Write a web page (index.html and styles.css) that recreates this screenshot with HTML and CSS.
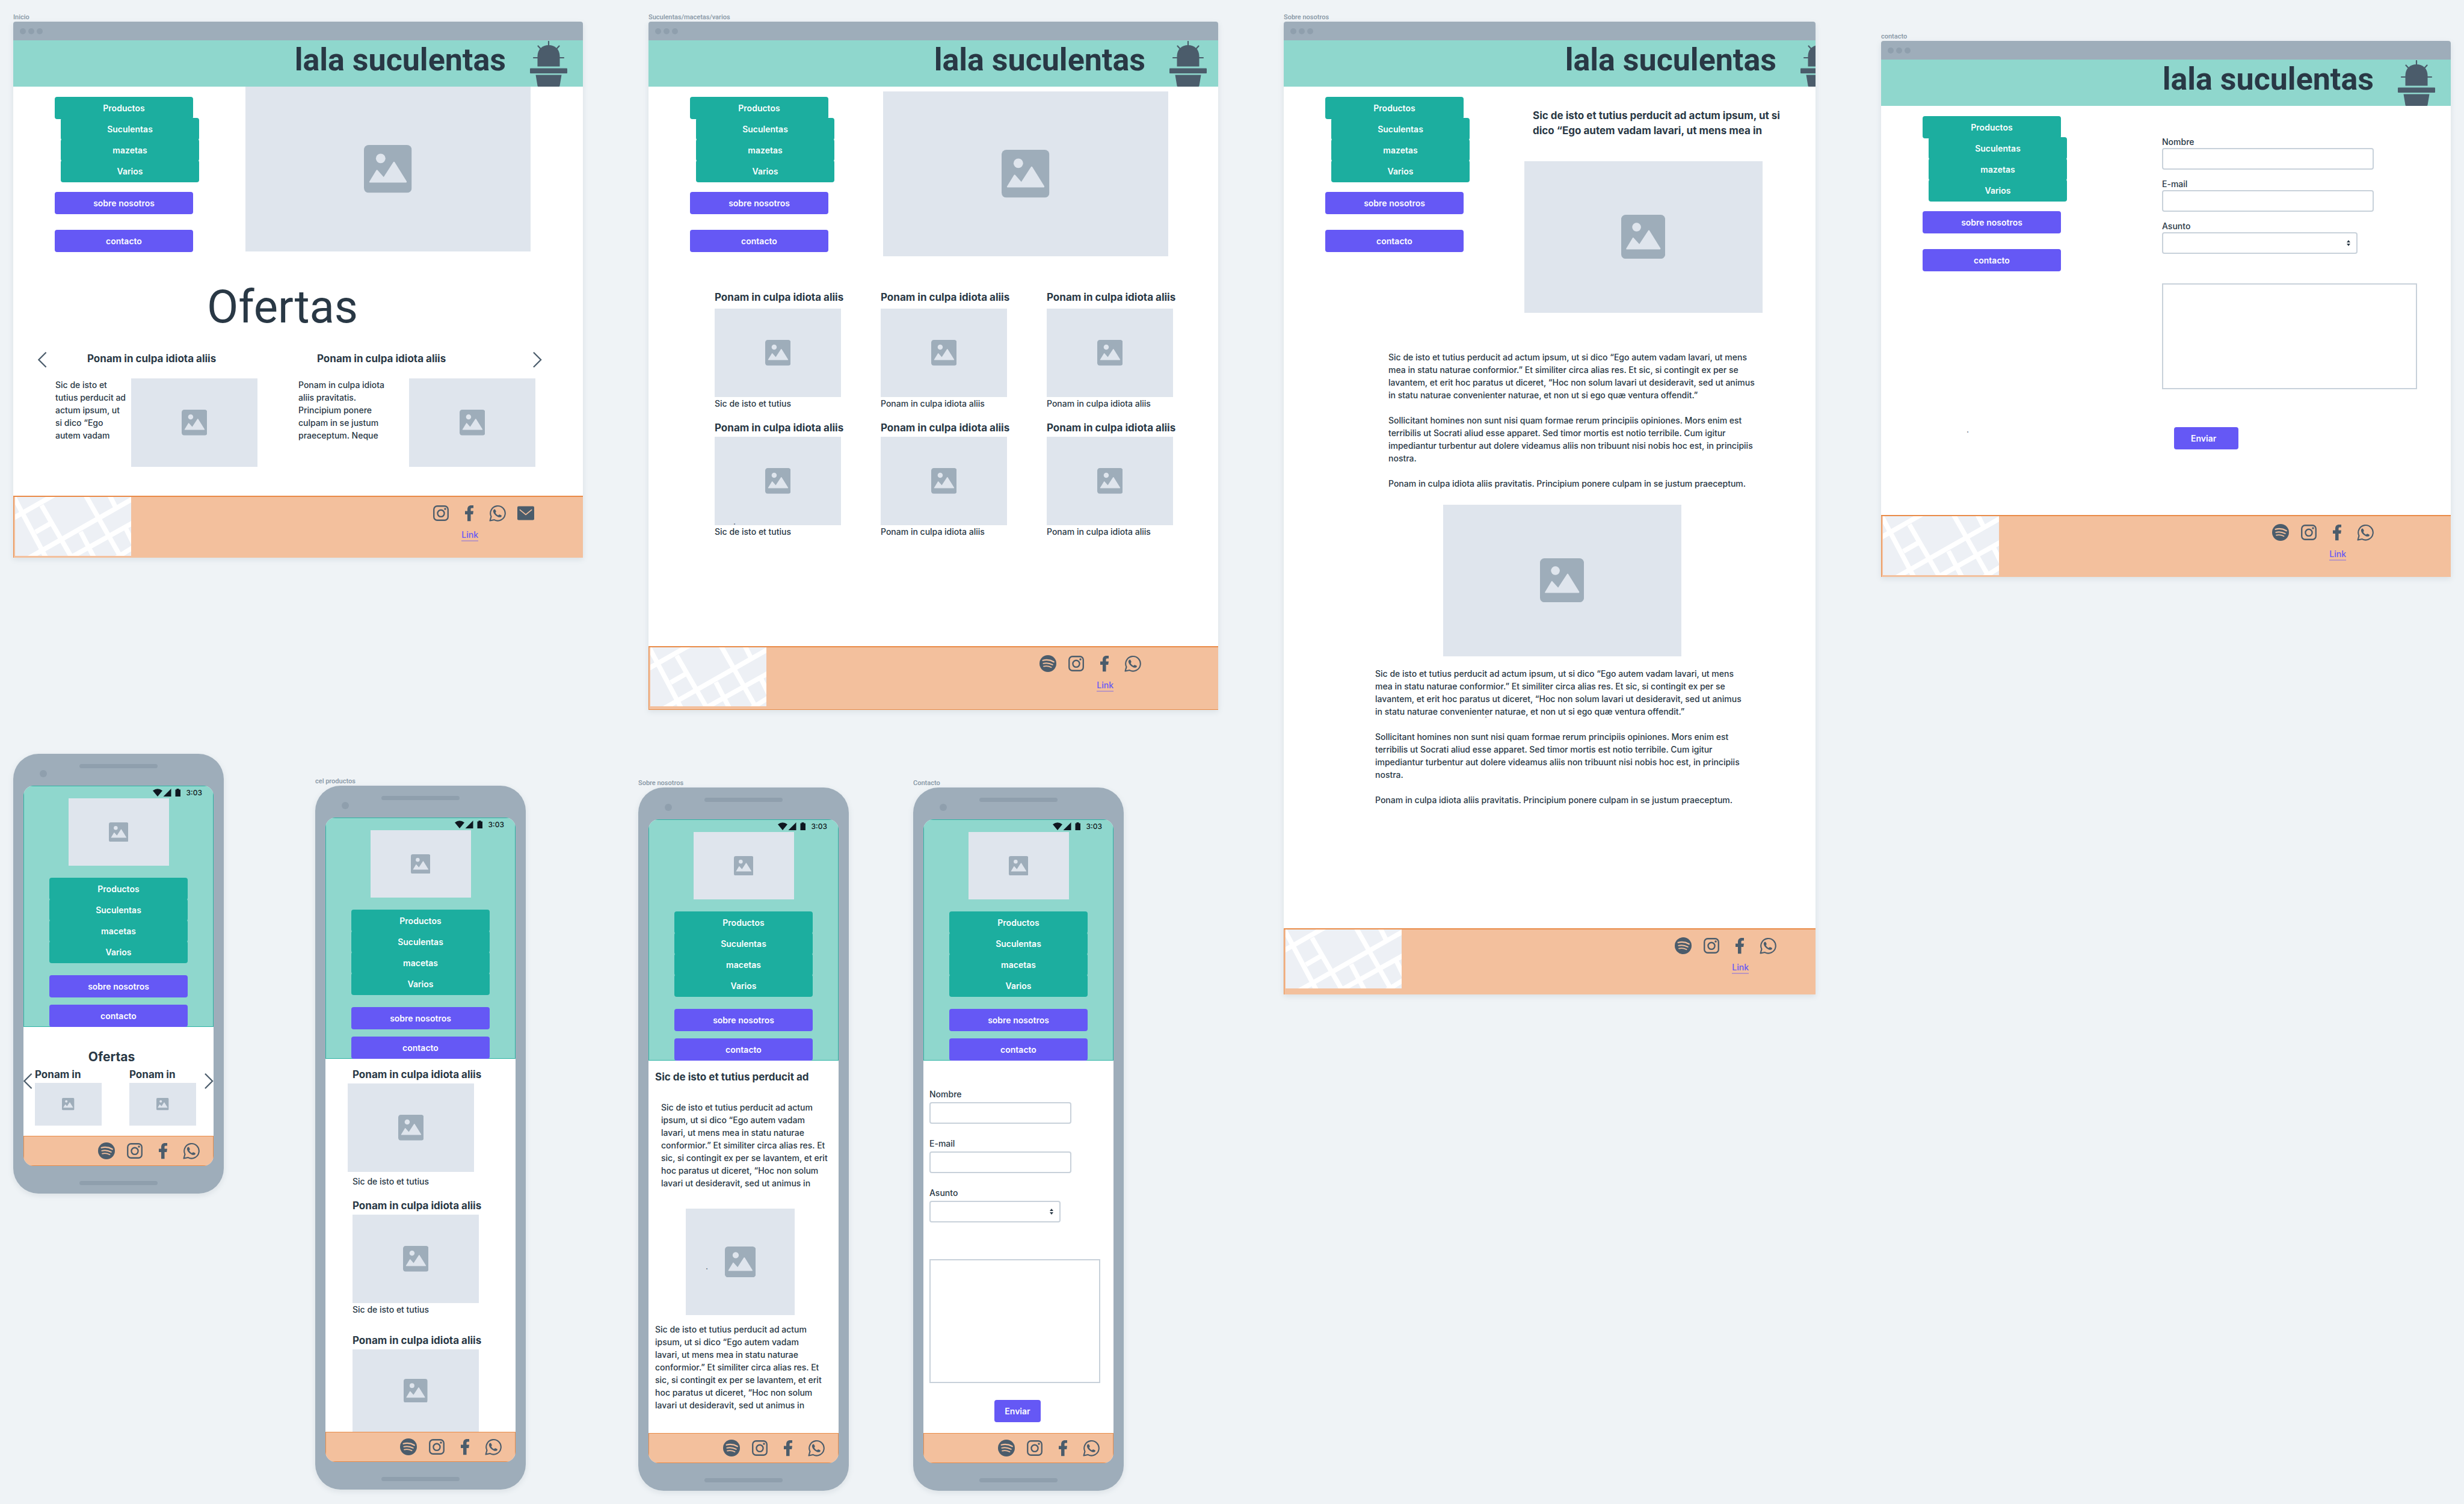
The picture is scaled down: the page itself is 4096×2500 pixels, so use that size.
FILE: index.html
```html
<!DOCTYPE html>
<html lang="es">
<head>
<meta charset="utf-8">
<title>lala suculentas</title>
<link rel="stylesheet" href="styles.css">
</head>
<body>

<svg class="sprite" aria-hidden="true">
  <symbol id="i-image" viewBox="0 0 80 80">
    <rect width="80" height="80" rx="8" fill="#9eadba"/>
    <circle cx="28" cy="22.500" r="8" fill="#dfe5ed"/>
    <path d="M9 61.500 20.500 42.500Q21.700 40.500 23 42.300L33 53.500 49 29Q50.300 27 51.600 29L71.500 61Q72 63 70.500 63H10Q8.300 63 9 61.500z" fill="#dfe5ed"/>
  </symbol>
  <symbol id="i-cactus" viewBox="0 0 62 76">
    <g fill="#4b5c6b">
      <path d="M12.500 42.500V25.500C12.500 14 20.500 7 31 7S49.500 14 49.500 25.500V42.500z"/>
      <rect x="0" y="45.500" width="62" height="8.500" rx="1"/>
      <path d="M9.500 56.500H52.500L49.500 74.500Q49.300 76 48 76H14Q12.700 76 12.500 74.500z"/>
    </g>
    <path d="M31 1V8M6 28H13M49 28H56M13.500 8.500 18.500 14M48.500 8.500 43.500 14" stroke="#4b5c6b" stroke-width="2.200" stroke-linecap="round" fill="none"/>
  </symbol>
  <symbol id="i-map" viewBox="0 0 193 98">
    <rect width="193" height="98" fill="#edf0f5"/>
    <path d="M-2 0 53 104M-4 36 68 -5M44 14 96 104M34 58.500 60 43.500M22 102 196 3M116 -5 178 104M156 -5 168 19M90 102 196 43M109 58 133 104M164 104 196 84M184 52 197 78" stroke="#fff" stroke-width="8" fill="none"/>
  </symbol>
  <symbol id="i-spotify" viewBox="0 0 40 40">
    <circle cx="20" cy="20" r="20" fill="#4b5c6b"/>
    <g stroke="#f3c09d" stroke-linecap="round" fill="none">
      <path d="M8 12.500Q22 9 34 16" stroke-width="3.200"/>
      <path d="M9 19.800Q20 16.800 31 22.800" stroke-width="2.800"/>
      <path d="M10 26.600Q19 24.200 28 29" stroke-width="2.400"/>
    </g>
  </symbol>
  <symbol id="i-instagram" viewBox="0 0 40 40">
    <g fill="none" stroke="#4b5c6b" stroke-width="3.300">
      <rect x="3.200" y="3.200" width="33.600" height="33.600" rx="8"/>
      <circle cx="20" cy="20.500" r="8"/>
    </g>
    <circle cx="30" cy="10" r="2.500" fill="#4b5c6b"/>
  </symbol>
  <symbol id="i-facebook" viewBox="0 0 40 40">
    <path d="M15.700 39V22.700H10V15h5.700V11.500C15.700 5 19 1.500 25 1.500h5V8h-3.600C24.300 8 23.600 9 23.600 11v4H30l-1.200 7.700h-5.200V39z" fill="#4b5c6b"/>
  </symbol>
  <symbol id="i-whatsapp" viewBox="0 0 40 40">
    <path d="M2.200 37.800 5 28A17.500 17.500 0 1 1 12.500 35.800z" fill="none" stroke="#4b5c6b" stroke-width="3" stroke-linejoin="round"/>
    <path d="M10.500 12.500Q13 9.500 15 12L16.600 15.500Q17 17 15 19 17.500 24 21.500 25.500 23.500 22.800 25.500 23.400L29 25Q31 26.500 29 28.500 25.500 31 20.500 28.500 11.500 24 9.800 16.500 9.500 14 10.500 12.500z" fill="#4b5c6b"/>
  </symbol>
  <symbol id="i-mail" viewBox="0 0 40 40">
    <rect x="0" y="3.500" width="40" height="33" rx="3" fill="#4b5c6b"/>
    <path d="M5.500 11.500 20 23.500 34.500 11.500" fill="none" stroke="#f3c09d" stroke-width="2.400"/>
  </symbol>
  <symbol id="i-prev" viewBox="0 0 16 28"><path d="M14.500 1 1.500 14 14.500 27" fill="none" stroke="#4b5c6b" stroke-width="2.400"/></symbol>
  <symbol id="i-next" viewBox="0 0 16 28"><path d="M1 1 14 14 1 27" fill="none" stroke="#4b5c6b" stroke-width="2.400"/></symbol>
  <symbol id="i-signal" viewBox="0 0 46 13">
    <g fill="#0f1720">
      <path d="M0 3.200Q8 -2.800 16 3.200L8 13z"/>
      <path d="M30.500 0V13H17.500z"/>
      <path d="M37.500 1.500H39.500V0H43.500V1.500H46V13H37.500z"/>
    </g>
  </symbol>
  <symbol id="i-sort" viewBox="0 0 6 10"><path d="M3 0 6 4H0zM3 10 0 6H6z" fill="#293845"/></symbol>
</svg>

<main class="board">

  <section class="artboard artboard--home">
    <h2 class="artboard__name">Inicio</h2>
    <div class="browser browser--short">
      <div class="browser__bar"><i></i><i></i><i></i></div>
      <header class="brand">
        <span class="brand__name">lala suculentas</span>
        <svg class="brand__logo"><use href="#i-cactus"/></svg>
      </header>
      <div class="intro">
        <nav class="menu">
          <button class="btn btn--teal">Productos</button>
          <div class="menu__sub">
            <button class="btn btn--teal">Suculentas</button>
            <button class="btn btn--teal">mazetas</button>
            <button class="btn btn--teal">Varios</button>
          </div>
          <button class="btn">sobre nosotros</button>
          <button class="btn">contacto</button>
        </nav>
        <div class="photo photo--hero"><svg><use href="#i-image"/></svg></div>
      </div>
      <h1 class="offers-title">Ofertas</h1>
      <div class="offers-head">
        <svg class="arrow"><use href="#i-prev"/></svg>
        <h3 class="heading">Ponam in culpa idiota aliis</h3>
        <h3 class="heading">Ponam in culpa idiota aliis</h3>
        <svg class="arrow"><use href="#i-next"/></svg>
      </div>
      <div class="offers">
        <p class="text">Sic de isto et<br>tutius perducit ad<br>actum ipsum, ut<br>si dico “Ego<br>autem vadam</p>
        <div class="photo photo--card"><svg><use href="#i-image"/></svg></div>
        <p class="text">Ponam in culpa idiota<br>aliis pravitatis.<br>Principium ponere<br>culpam in se justum<br>praeceptum. Neque</p>
        <div class="photo photo--card"><svg><use href="#i-image"/></svg></div>
      </div>
      <footer class="foot">
        <svg class="foot__map"><use href="#i-map"/></svg>
        <div class="foot__links foot__links--mail">
          <div class="social">
            <svg><use href="#i-instagram"/></svg>
            <svg><use href="#i-facebook"/></svg>
            <svg><use href="#i-whatsapp"/></svg>
            <svg><use href="#i-mail"/></svg>
          </div>
          <a class="link" href="#">Link</a>
        </div>
      </footer>
    </div>
  </section>

  <section class="artboard artboard--catalog">
    <h2 class="artboard__name">Suculentas/macetas/varios</h2>
    <div class="browser browser--medium">
      <div class="browser__bar"><i></i><i></i><i></i></div>
      <header class="brand brand--wide">
        <span class="brand__name">lala suculentas</span>
        <svg class="brand__logo"><use href="#i-cactus"/></svg>
      </header>
      <div class="intro intro--catalog">
        <nav class="menu">
          <button class="btn btn--teal">Productos</button>
          <div class="menu__sub">
            <button class="btn btn--teal">Suculentas</button>
            <button class="btn btn--teal">mazetas</button>
            <button class="btn btn--teal">Varios</button>
          </div>
          <button class="btn">sobre nosotros</button>
          <button class="btn">contacto</button>
        </nav>
        <div class="photo photo--hero"><svg><use href="#i-image"/></svg></div>
      </div>
      <div class="products products--first">
        <article class="product">
          <h3 class="heading">Ponam in culpa idiota aliis</h3>
          <div class="photo photo--card"><svg><use href="#i-image"/></svg></div>
          <p class="text">Sic de isto et tutius</p>
        </article>
        <article class="product">
          <h3 class="heading">Ponam in culpa idiota aliis</h3>
          <div class="photo photo--card"><svg><use href="#i-image"/></svg></div>
          <p class="text">Ponam in culpa idiota aliis</p>
        </article>
        <article class="product">
          <h3 class="heading">Ponam in culpa idiota aliis</h3>
          <div class="photo photo--card"><svg><use href="#i-image"/></svg></div>
          <p class="text">Ponam in culpa idiota aliis</p>
        </article>
      </div>
      <div class="products">
        <article class="product">
          <h3 class="heading">Ponam in culpa idiota aliis</h3>
          <div class="photo photo--card"><svg><use href="#i-image"/></svg></div>
          <p class="text">Sic de isto et tutius</p>
        </article>
        <article class="product">
          <h3 class="heading">Ponam in culpa idiota aliis</h3>
          <div class="photo photo--card"><svg><use href="#i-image"/></svg></div>
          <p class="text">Ponam in culpa idiota aliis</p>
        </article>
        <article class="product">
          <h3 class="heading">Ponam in culpa idiota aliis</h3>
          <div class="photo photo--card"><svg><use href="#i-image"/></svg></div>
          <p class="text">Ponam in culpa idiota aliis</p>
        </article>
      </div>
      <footer class="foot foot--medium">
        <svg class="foot__map"><use href="#i-map"/></svg>
        <div class="foot__links">
          <div class="social">
            <svg><use href="#i-spotify"/></svg>
            <svg><use href="#i-instagram"/></svg>
            <svg><use href="#i-facebook"/></svg>
            <svg><use href="#i-whatsapp"/></svg>
          </div>
          <a class="link" href="#">Link</a>
        </div>
      </footer>
    </div>
    <span class="mark mark--catalog">.</span>
  </section>

  <section class="artboard artboard--about">
    <h2 class="artboard__name">Sobre nosotros</h2>
    <div class="browser browser--tall">
      <div class="browser__bar"><i></i><i></i><i></i></div>
      <header class="brand brand--narrow">
        <span class="brand__name">lala suculentas</span>
        <svg class="brand__logo"><use href="#i-cactus"/></svg>
      </header>
      <div class="intro intro--about">
        <nav class="menu">
          <button class="btn btn--teal">Productos</button>
          <div class="menu__sub">
            <button class="btn btn--teal">Suculentas</button>
            <button class="btn btn--teal">mazetas</button>
            <button class="btn btn--teal">Varios</button>
          </div>
          <button class="btn">sobre nosotros</button>
          <button class="btn">contacto</button>
        </nav>
        <div class="lead">
          <h3 class="heading">Sic de isto et tutius perducit ad actum ipsum, ut si<br>dico “Ego autem vadam lavari, ut mens mea in</h3>
          <div class="photo photo--wide"><svg><use href="#i-image"/></svg></div>
        </div>
      </div>
      <div class="story story--first">
        <p class="text">Sic de isto et tutius perducit ad actum ipsum, ut si dico “Ego autem vadam lavari, ut mens<br>mea in statu naturae conformior.” Et similiter circa alias res. Et sic, si contingit ex per se<br>lavantem, et erit hoc paratus ut diceret, “Hoc non solum lavari ut desideravit, sed ut animus<br>in statu naturae convenienter naturae, et non ut si ego quæ ventura offendit.”</p>
        <p class="text">Sollicitant homines non sunt nisi quam formae rerum principiis opiniones. Mors enim est<br>terribilis ut Socrati aliud esse apparet. Sed timor mortis est notio terribile. Cum igitur<br>impediantur turbentur aut dolere videamus aliis non tribuunt nisi nobis hoc est, in principiis<br>nostra.</p>
        <p class="text">Ponam in culpa idiota aliis pravitatis. Principium ponere culpam in se justum praeceptum.</p>
      </div>
      <div class="photo photo--wide photo--middle"><svg><use href="#i-image"/></svg></div>
      <div class="story">
        <p class="text">Sic de isto et tutius perducit ad actum ipsum, ut si dico “Ego autem vadam lavari, ut mens<br>mea in statu naturae conformior.” Et similiter circa alias res. Et sic, si contingit ex per se<br>lavantem, et erit hoc paratus ut diceret, “Hoc non solum lavari ut desideravit, sed ut animus<br>in statu naturae convenienter naturae, et non ut si ego quæ ventura offendit.”</p>
        <p class="text">Sollicitant homines non sunt nisi quam formae rerum principiis opiniones. Mors enim est<br>terribilis ut Socrati aliud esse apparet. Sed timor mortis est notio terribile. Cum igitur<br>impediantur turbentur aut dolere videamus aliis non tribuunt nisi nobis hoc est, in principiis<br>nostra.</p>
        <p class="text">Ponam in culpa idiota aliis pravitatis. Principium ponere culpam in se justum praeceptum.</p>
      </div>
      <footer class="foot foot--tall">
        <svg class="foot__map"><use href="#i-map"/></svg>
        <div class="foot__links foot__links--about">
          <div class="social">
            <svg><use href="#i-spotify"/></svg>
            <svg><use href="#i-instagram"/></svg>
            <svg><use href="#i-facebook"/></svg>
            <svg><use href="#i-whatsapp"/></svg>
          </div>
          <a class="link" href="#">Link</a>
        </div>
      </footer>
    </div>
    <span class="mark mark--about">.</span>
  </section>

  <section class="artboard artboard--contact">
    <h2 class="artboard__name">contacto</h2>
    <div class="browser browser--short">
      <div class="browser__bar"><i></i><i></i><i></i></div>
      <header class="brand">
        <span class="brand__name">lala suculentas</span>
        <svg class="brand__logo"><use href="#i-cactus"/></svg>
      </header>
      <div class="intro intro--contact">
        <nav class="menu">
          <button class="btn btn--teal">Productos</button>
          <div class="menu__sub">
            <button class="btn btn--teal">Suculentas</button>
            <button class="btn btn--teal">mazetas</button>
            <button class="btn btn--teal">Varios</button>
          </div>
          <button class="btn">sobre nosotros</button>
          <button class="btn">contacto</button>
        </nav>
        <form class="form">
          <div class="field"><label for="web-name">Nombre</label><input id="web-name" type="text"></div>
          <div class="field"><label for="web-mail">E-mail</label><input id="web-mail" type="email"></div>
          <div class="field">
            <label for="web-topic">Asunto</label>
            <div class="select"><select id="web-topic"></select><svg><use href="#i-sort"/></svg></div>
          </div>
          <textarea aria-label="Mensaje"></textarea>
          <button class="btn btn--send" type="button">Enviar</button>
        </form>
      </div>
      <footer class="foot">
        <svg class="foot__map"><use href="#i-map"/></svg>
        <div class="foot__links">
          <div class="social">
            <svg><use href="#i-spotify"/></svg>
            <svg><use href="#i-instagram"/></svg>
            <svg><use href="#i-facebook"/></svg>
            <svg><use href="#i-whatsapp"/></svg>
          </div>
          <a class="link" href="#">Link</a>
        </div>
      </footer>
    </div>
    <span class="mark mark--contact">.</span>
  </section>

  <section class="artboard artboard--phone-home">
    <div class="phone phone--short">
      <div class="phone__top"><i class="phone__camera"></i><i class="phone__slot"></i></div>
      <div class="screen">
        <header class="top">
          <div class="status"><svg><use href="#i-signal"/></svg><span>3:03</span></div>
          <div class="photo photo--logo"><svg><use href="#i-image"/></svg></div>
          <nav class="menu menu--phone">
            <button class="btn btn--teal">Productos</button>
            <button class="btn btn--teal">Suculentas</button>
            <button class="btn btn--teal">macetas</button>
            <button class="btn btn--teal">Varios</button>
            <button class="btn">sobre nosotros</button>
            <button class="btn">contacto</button>
          </nav>
        </header>
        <h1 class="mini-title">Ofertas</h1>
        <div class="mini-offers">
          <svg class="arrow"><use href="#i-prev"/></svg>
          <div class="mini-offer">
            <h3 class="heading">Ponam in</h3>
            <div class="photo photo--mini"><svg><use href="#i-image"/></svg></div>
          </div>
          <div class="mini-offer">
            <h3 class="heading">Ponam in</h3>
            <div class="photo photo--mini"><svg><use href="#i-image"/></svg></div>
          </div>
          <svg class="arrow arrow--end"><use href="#i-next"/></svg>
        </div>
        <footer class="dock">
          <div class="social">
            <svg><use href="#i-spotify"/></svg>
            <svg><use href="#i-instagram"/></svg>
            <svg><use href="#i-facebook"/></svg>
            <svg><use href="#i-whatsapp"/></svg>
          </div>
        </footer>
      </div>
      <div class="phone__bottom"><i class="phone__slot"></i></div>
    </div>
  </section>

  <section class="artboard artboard--phone-catalog">
    <h2 class="artboard__name">cel productos</h2>
    <div class="phone">
      <div class="phone__top"><i class="phone__camera"></i><i class="phone__slot"></i></div>
      <div class="screen">
        <header class="top">
          <div class="status"><svg><use href="#i-signal"/></svg><span>3:03</span></div>
          <div class="photo photo--logo"><svg><use href="#i-image"/></svg></div>
          <nav class="menu menu--phone">
            <button class="btn btn--teal">Productos</button>
            <button class="btn btn--teal">Suculentas</button>
            <button class="btn btn--teal">macetas</button>
            <button class="btn btn--teal">Varios</button>
            <button class="btn">sobre nosotros</button>
            <button class="btn">contacto</button>
          </nav>
        </header>
        <div class="feed">
          <article class="product product--lead">
            <h3 class="heading">Ponam in culpa idiota aliis</h3>
            <div class="photo photo--card"><svg><use href="#i-image"/></svg></div>
            <p class="text">Sic de isto et tutius</p>
          </article>
          <article class="product">
            <h3 class="heading">Ponam in culpa idiota aliis</h3>
            <div class="photo photo--card"><svg><use href="#i-image"/></svg></div>
            <p class="text">Sic de isto et tutius</p>
          </article>
          <article class="product">
            <h3 class="heading">Ponam in culpa idiota aliis</h3>
            <div class="photo photo--cut"><svg><use href="#i-image"/></svg></div>
          </article>
        </div>
        <footer class="dock">
          <div class="social">
            <svg><use href="#i-spotify"/></svg>
            <svg><use href="#i-instagram"/></svg>
            <svg><use href="#i-facebook"/></svg>
            <svg><use href="#i-whatsapp"/></svg>
          </div>
        </footer>
      </div>
      <div class="phone__bottom"><i class="phone__slot"></i></div>
    </div>
  </section>

  <section class="artboard artboard--phone-about">
    <h2 class="artboard__name">Sobre nosotros</h2>
    <div class="phone">
      <div class="phone__top"><i class="phone__camera"></i><i class="phone__slot"></i></div>
      <div class="screen">
        <header class="top">
          <div class="status"><svg><use href="#i-signal"/></svg><span>3:03</span></div>
          <div class="photo photo--logo"><svg><use href="#i-image"/></svg></div>
          <nav class="menu menu--phone">
            <button class="btn btn--teal">Productos</button>
            <button class="btn btn--teal">Suculentas</button>
            <button class="btn btn--teal">macetas</button>
            <button class="btn btn--teal">Varios</button>
            <button class="btn">sobre nosotros</button>
            <button class="btn">contacto</button>
          </nav>
        </header>
        <div class="note">
          <h3 class="heading">Sic de isto et tutius perducit ad</h3>
          <p class="text note__intro">Sic de isto et tutius perducit ad actum<br>ipsum, ut si dico “Ego autem vadam<br>lavari, ut mens mea in statu naturae<br>conformior.” Et similiter circa alias res. Et<br>sic, si contingit ex per se lavantem, et erit<br>hoc paratus ut diceret, “Hoc non solum<br>lavari ut desideravit, sed ut animus in</p>
          <div class="photo photo--note"><svg><use href="#i-image"/></svg></div>
          <p class="text">Sic de isto et tutius perducit ad actum<br>ipsum, ut si dico “Ego autem vadam<br>lavari, ut mens mea in statu naturae<br>conformior.” Et similiter circa alias res. Et<br>sic, si contingit ex per se lavantem, et erit<br>hoc paratus ut diceret, “Hoc non solum<br>lavari ut desideravit, sed ut animus in</p>
        </div>
        <footer class="dock">
          <div class="social">
            <svg><use href="#i-spotify"/></svg>
            <svg><use href="#i-instagram"/></svg>
            <svg><use href="#i-facebook"/></svg>
            <svg><use href="#i-whatsapp"/></svg>
          </div>
        </footer>
      </div>
      <div class="phone__bottom"><i class="phone__slot"></i></div>
    </div>
    <span class="mark mark--phone">.</span>
  </section>

  <section class="artboard artboard--phone-contact">
    <h2 class="artboard__name">Contacto</h2>
    <div class="phone">
      <div class="phone__top"><i class="phone__camera"></i><i class="phone__slot"></i></div>
      <div class="screen">
        <header class="top">
          <div class="status"><svg><use href="#i-signal"/></svg><span>3:03</span></div>
          <div class="photo photo--logo"><svg><use href="#i-image"/></svg></div>
          <nav class="menu menu--phone">
            <button class="btn btn--teal">Productos</button>
            <button class="btn btn--teal">Suculentas</button>
            <button class="btn btn--teal">macetas</button>
            <button class="btn btn--teal">Varios</button>
            <button class="btn">sobre nosotros</button>
            <button class="btn">contacto</button>
          </nav>
        </header>
        <form class="form form--phone">
          <div class="field"><label for="cel-name">Nombre</label><input id="cel-name" type="text"></div>
          <div class="field"><label for="cel-mail">E-mail</label><input id="cel-mail" type="email"></div>
          <div class="field">
            <label for="cel-topic">Asunto</label>
            <div class="select"><select id="cel-topic"></select><svg><use href="#i-sort"/></svg></div>
          </div>
          <textarea aria-label="Mensaje"></textarea>
          <button class="btn btn--send" type="button">Enviar</button>
        </form>
        <footer class="dock">
          <div class="social">
            <svg><use href="#i-spotify"/></svg>
            <svg><use href="#i-instagram"/></svg>
            <svg><use href="#i-facebook"/></svg>
            <svg><use href="#i-whatsapp"/></svg>
          </div>
        </footer>
      </div>
      <div class="phone__bottom"><i class="phone__slot"></i></div>
    </div>
  </section>

</main>
</body>
</html>
```
FILE: styles.css
```css
*, *::before, *::after { box-sizing: border-box; }

body {
  margin: 0;
  background: #eff3f6;
  color: #293845;
  font-family: Inter, Roboto, sans-serif;
  font-size: 14px;
  font-weight: 500;
  line-height: 21px;
}

h1, h2, h3, p { margin: 0; }
svg { display: block; }
.sprite { position: absolute; width: 0; height: 0; }

/* free canvas that holds the artboards */
.board { position: relative; min-height: 100vh; overflow: hidden; }
.artboard { position: absolute; }
.artboard--home { left: 22px; top: 22px; width: 947px; }
.artboard--catalog { left: 1078px; top: 22px; width: 947px; }
.artboard--about { left: 2134px; top: 22px; width: 884px; }
.artboard--contact { left: 3127px; top: 54px; width: 947px; }
.artboard--phone-home { left: 22px; top: 1253px; width: 350px; }
.artboard--phone-catalog { left: 524px; top: 1292px; width: 350px; }
.artboard--phone-about { left: 1061px; top: 1295px; width: 350px; }
.artboard--phone-contact { left: 1518px; top: 1295px; width: 350px; }

.artboard__name {
  color: #8595a3;
  font-family: Roboto, sans-serif;
  font-size: 11px;
  font-weight: 500;
  line-height: 14px;
}

/* tiny stray dots drawn on the canvas */
.mark { position: absolute; color: #4b5c6b; font-size: 14px; font-weight: 400; line-height: 14px; }
.mark--catalog { left: 141px; top: 838px; }
.mark--about { left: 334px; top: 1159px; }
.mark--contact { left: 142px; top: 653px; }
.mark--phone { left: 112px; top: 803px; }

/* browser window */
.browser {
  display: flex;
  flex-direction: column;
  overflow: hidden;
  border-radius: 4px 4px 0 0;
  background: #fff;
  box-shadow: 0 3px 10px rgba(90, 110, 130, 0.14);
}
.browser--short { min-height: 891px; }
.browser--medium { min-height: 1144px; }
.browser--tall { min-height: 1617px; }
.browser__bar {
  display: flex;
  align-items: center;
  gap: 4px;
  height: 31px;
  padding-left: 11px;
  background: #9eadba;
}
.browser__bar i { width: 10px; height: 10px; border-radius: 50%; background: #8f9fad; }

.brand {
  display: flex;
  justify-content: flex-end;
  gap: 40px;
  height: 77px;
  padding-right: 26px;
  background: #8fd7cd;
}
.brand--wide { padding-right: 19px; }
.brand--narrow { margin-right: -37px; padding-right: 0; }
.brand__name {
  font-family: Roboto, sans-serif;
  font-size: 52px;
  font-weight: 700;
  line-height: 66px;
  white-space: nowrap;
}
.brand__logo { flex: none; width: 62px; height: 76px; margin-top: 1px; }

/* buttons and menu */
.btn {
  display: block;
  width: 230px;
  height: 37px;
  padding: 0;
  border: 0;
  border-radius: 4px;
  background: #6558f5;
  color: #fff;
  font-family: inherit;
  font-size: 14px;
  font-weight: 600;
  line-height: 37px;
  text-align: center;
}
.btn--teal { background: #1cae9f; }
.menu { flex: none; width: 240px; padding-top: 17px; }
.menu .btn { margin-top: 26px; }
.menu .btn--teal { margin-top: -2px; }
.menu > .btn--teal:first-child { margin-top: 0; }
.menu__sub { padding-left: 10px; }
.menu__sub + .btn { margin-top: 16px; }

.intro {
  display: flex;
  align-items: flex-start;
  gap: 77px;
  padding-left: 69px;
}
.intro--catalog { gap: 81px; }
.intro--catalog .photo--hero { margin-top: 8px; }
.intro--about { gap: 91px; }
.intro--contact { gap: 158px; }

/* image placeholders */
.photo {
  display: flex;
  align-items: center;
  justify-content: center;
  flex: none;
  background: #dfe5ed;
}
.photo svg { height: 29%; aspect-ratio: 1; }
.photo--hero { width: 474px; height: 274px; }
.photo--wide { width: 396px; height: 252px; }
.photo--card { width: 210px; height: 147px; }
.photo--cut { width: 210px; height: 137px; }
.photo--logo { width: 167px; height: 112px; }
.photo--mini { width: 111px; height: 71px; }
.photo--note { width: 181px; height: 177px; }

.heading { font-size: 17px; font-weight: 700; line-height: 24px; white-space: nowrap; }
.text { white-space: nowrap; }
.arrow { flex: none; width: 15px; height: 28px; }

/* home: offers */
.offers-title {
  margin-top: 47px;
  padding-right: 52px;
  font-family: Roboto, sans-serif;
  font-size: 76px;
  font-weight: 400;
  line-height: 88px;
  text-align: center;
}
.offers-head {
  display: grid;
  grid-template-columns: 82px 382px 1fr 15px;
  align-items: start;
  margin-top: 30px;
  padding: 0 68px 0 41px;
}
.offers {
  display: grid;
  grid-template-columns: 126px 278px 184px 210px;
  margin-top: 17px;
  padding-left: 70px;
}

/* catalog grid */
.products {
  display: grid;
  grid-template-columns: repeat(3, 210px);
  column-gap: 66px;
  margin-top: 18px;
  padding-left: 110px;
}
.products--first { margin-top: 56px; }
.product .photo { margin-top: 3px; }
.products--first .product .photo { margin-top: 7px; }

/* about */
.lead { padding-top: 36px; }
.lead .heading { padding-left: 14px; line-height: 25px; }
.lead .photo { margin-top: 38px; }
.story { margin-top: 18px; padding-left: 152px; }
.story--first { margin-top: 63px; padding-left: 174px; }
.story .text + .text { margin-top: 21px; }
.photo--middle { margin: 25px 0 0 265px; }

/* contact form */
.form {
  display: flex;
  flex-direction: column;
  align-items: flex-start;
  gap: 14px;
  padding-top: 50px;
}
.field { display: flex; flex-direction: column; width: 352px; }
.field label { line-height: 20px; }
.field input,
.field select,
.form textarea {
  display: block;
  width: 100%;
  height: 36px;
  margin: 0;
  padding: 0 12px;
  border: 2px solid #c8d1da;
  border-radius: 4px;
  background: #fff;
  color: inherit;
  font: inherit;
}
.select { position: relative; width: 325px; }
.select select { appearance: none; }
.select svg { position: absolute; right: 12px; top: 13px; width: 6px; height: 10px; pointer-events: none; }
.form textarea { width: 424px; height: 176px; margin-top: 35px; border-radius: 0; resize: none; }
.btn--send { width: 107px; margin: 49px 0 0 20px; padding-left: 28px; text-align: left; }

.form--phone { gap: 23px; padding: 46px 0 0 10px; }
.form--phone .field { gap: 3px; width: 236px; }
.form--phone .select { width: 218px; }
.form--phone textarea { width: 284px; height: 206px; margin-top: 38px; }
.form--phone .btn--send { width: 77px; margin: 5px 0 0 108px; padding: 0; text-align: center; }

/* browser footer */
.foot {
  display: flex;
  align-items: flex-start;
  justify-content: space-between;
  height: 103px;
  margin-top: auto;
  border: 1px solid #e98b48;
  border-width: 2px 0 0 1px;
  background: #f3c09d;
}
.foot--medium { height: 106px; border-bottom-width: 1px; }
.foot--tall { height: 110px; }
.foot__map { width: 193px; height: 98px; margin-left: 2px; }
.foot__links { display: flex; flex-direction: column; align-items: flex-end; padding: 13px 128px 0 0; }
.foot__links--mail { padding-right: 81px; }
.foot__links--about { padding-right: 65px; }
.social { display: flex; gap: 19px; }
.social svg { width: 28px; height: 28px; }
.link {
  margin: 13px 46px 0 0;
  border-bottom: 2px solid rgba(101, 88, 245, 0.4);
  color: #6558f5;
  line-height: 18px;
  text-decoration: none;
}
.foot__links--mail .link { margin-right: 93px; }

/* phone */
.phone {
  display: flex;
  flex-direction: column;
  min-height: 1169px;
  padding: 0 17px;
  border-radius: 42px;
  background: #9eadba;
  box-shadow: 0 3px 10px rgba(90, 110, 130, 0.14);
}
.phone--short { min-height: 731px; }
.phone__top { position: relative; display: flex; justify-content: center; height: 53px; padding-top: 17px; }
.phone__bottom { display: flex; justify-content: center; height: 46px; padding-top: 25px; }
.phone__slot { width: 130px; height: 7px; border-radius: 4px; background: #8f9fad; }
.phone__camera {
  position: absolute;
  left: 27px;
  top: 27px;
  width: 12px;
  height: 12px;
  border-radius: 50%;
  background: #8f9fad;
}
.screen {
  display: flex;
  flex: 1;
  flex-direction: column;
  overflow: hidden;
  border-radius: 17px;
  background: #fff;
}

.top {
  display: flex;
  flex-direction: column;
  align-items: center;
  border: 1px solid #2fb3a4;
  background: #8fd7cd;
}
.status {
  display: flex;
  align-items: center;
  align-self: flex-end;
  gap: 10px;
  height: 20px;
  padding-right: 18px;
  color: #0f1720;
  font-size: 12px;
}
.status svg { width: 46px; height: 13px; }
.menu--phone { width: 230px; margin-bottom: -1px; padding-top: 20px; }
.menu--phone .btn { margin-top: 12px; }
.menu--phone .btn--teal { margin-top: -2px; }
.menu--phone .btn--teal + .btn:not(.btn--teal) { margin-top: 20px; }

.mini-title {
  margin-top: 36px;
  padding-right: 23px;
  font-size: 21px;
  font-weight: 700;
  line-height: 28px;
  text-align: center;
}
.mini-offers { display: flex; align-items: flex-start; margin-top: 3px; }
.mini-offers .arrow { margin-top: 9px; }
.mini-offers .arrow--end { margin-left: auto; }
.mini-offer { width: 111px; margin-left: 4px; }
.mini-offer + .mini-offer { margin-left: 46px; }
.mini-offer .photo { margin-top: 2px; }

.feed { padding: 14px 0 0 45px; }
.product--lead .photo { margin: 3px 0 5px -8px; }
.product--lead + .product { margin-top: 18px; }
.feed .product:last-child { margin-top: 29px; }

.note { padding: 15px 0 0 11px; }
.note__intro { margin: 28px 0 0 10px; }
.photo--note { margin: 32px 0 13px 51px; }

.dock {
  display: flex;
  align-items: center;
  justify-content: flex-end;
  height: 50px;
  margin-top: auto;
  padding-right: 22px;
  border: 1px solid #e98b48;
  background: #f3c09d;
}
```
